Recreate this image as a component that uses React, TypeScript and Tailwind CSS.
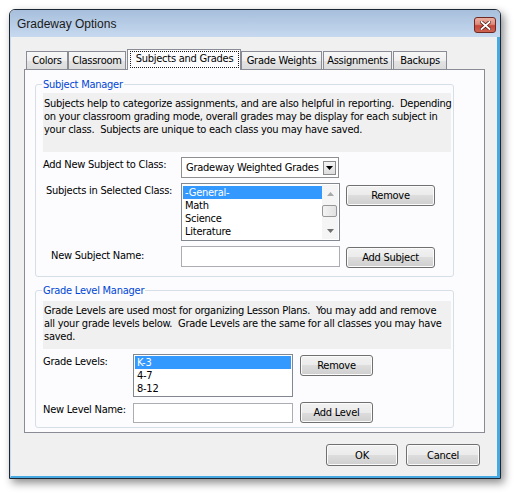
import type { ReactNode } from 'react'

const btnBase = 'flex items-center justify-center rounded-[3px] border border-[#707070] bg-[linear-gradient(#f2f2f2_0%,#ebebeb_50%,#dddddd_50%,#cfcfcf_100%)] shadow-[inset_0_0_0_1px_#fbfbfb] text-black leading-[13px]'
const tabBase = 'flex h-[18px] items-center justify-center border border-b-0 border-[#898c95] bg-[linear-gradient(#f7f7f7_0%,#efefef_50%,#e4e4e4_50%,#dbdbdb_100%)] pt-px'

function Button({ className, children }: { className: string, children: ReactNode }) {
  return <button type="button" className={`${btnBase} ${className}`}>{children}</button>
}

function Arrow({ dir, color }: { dir: 'up' | 'down', color: string }) {
  return (
    <svg width="7" height="4" viewBox="0 0 7 4">
      <path d={dir === 'up' ? 'M0 4 L3.5 0 L7 4Z' : 'M0 0 L7 0 L3.5 4Z'} fill={color} />
    </svg>
  )
}

function ScrollBar() {
  return (
    <div className="flex w-[16px] flex-col bg-[#f5f5f5]">
      <div className="flex h-[17px] items-center justify-center"><Arrow dir="up" color="#a8a8a8" /></div>
      <div className="flex-1 pt-[3px]">
        <div className="h-[12px] w-[15px] rounded-[2px] border border-[#979797] bg-[linear-gradient(90deg,#f3f3f3,#e2e2e2)]" />
      </div>
      <div className="flex h-[17px] items-center justify-center"><Arrow dir="down" color="#6f6f6f" /></div>
    </div>
  )
}

function ListItem({ text, selected }: { text: string, selected?: boolean }) {
  return (
    <div className={selected ? 'h-[13px] bg-[#3399ff] pl-[2px] leading-[13px] text-white' : 'h-[13px] pl-[2px] leading-[13px]'}>
      {text}
    </div>
  )
}

function Group({ title, className, children }: { title: string, className: string, children: ReactNode }) {
  return (
    <fieldset className={`ml-[10px] w-[419px] rounded-[3px] border border-[#d5dfe5] ${className}`}>
      <legend className="ml-[6px] px-px leading-[13px] text-[#0046d5]">{title}</legend>
      {children}
    </fieldset>
  )
}

function Note({ lines, className }: { lines: string[], className: string }) {
  return (
    <div className={`ml-[7px] w-[408px] bg-[#f0f0f0] pl-px leading-[13px] ${className}`}>
      {lines.map(l => <div key={l} className="whitespace-pre">{l}</div>)}
    </div>
  )
}

export default function App() {
  return (
    <div className="h-[494px] w-[515px] bg-white pl-[9px] pt-[9px] font-['DejaVu_Sans_Condensed','Liberation_Sans',sans-serif] text-[11px] tracking-[-0.25px] text-black">
      <div className="flex h-[470px] w-[492px] flex-col overflow-hidden rounded-t-[6px] border border-[#1c2733] shadow-[3px_4px_9px_rgba(0,0,0,0.45)]">
        {/* caption */}
        <div className="flex h-[27px] shrink-0 bg-[linear-gradient(#a7bfdc,#c6d9ef)]">
          <div className="flex flex-1 items-center pl-[7px] font-['Liberation_Sans',sans-serif] text-[12px] tracking-normal text-[#1a1a1a]">Gradeway Options</div>
          <div className="mr-[4px] mt-[7px] flex h-[16px] w-[22px] items-center justify-center rounded-[3px] border border-[#6e2a22] bg-[linear-gradient(#eab0a2_0%,#dd8a7b_45%,#c4473a_55%,#cf6452_100%)]">
            <svg width="11" height="9" viewBox="0 0 11 9">
              <path d="M1.5 1 L9.5 8 M9.5 1 L1.5 8" stroke="#5a1e18" strokeWidth="3.4" strokeLinecap="square" />
              <path d="M1.5 1 L9.5 8 M9.5 1 L1.5 8" stroke="#ffffff" strokeWidth="1.8" strokeLinecap="square" />
            </svg>
          </div>
        </div>

        {/* client */}
        <div className="flex-1 border-b-2 border-l border-r-[3px] border-b-[#47a9e1] border-l-[#c8daee] border-r-[#47a9e1] bg-[#f0f0f0] pl-[13px] pt-[12px]">
          <div className="flex h-[20px] items-end pl-[2px]">
            <div className={`${tabBase} w-[42px]`}>Colors</div>
            <div className={`${tabBase} w-[58px]`}>Classroom</div>
            <div className="relative z-10 -mb-px ml-px flex h-[21px] w-[114px] border border-b-0 border-[#898c95] bg-[#fcfcfe] px-px pt-px pb-[2px]">
              <div className="ml-px flex flex-1 items-center justify-center border border-dotted border-[#1a1a1a]">Subjects and Grades</div>
            </div>
            <div className={`${tabBase} w-[81px]`}>Grade Weights</div>
            <div className={`${tabBase} ml-px w-[69px]`}>Assignments</div>
            <div className={`${tabBase} ml-px w-[54px]`}>Backups</div>
          </div>

          <div className="h-[364px] w-[461px] border border-[#898c95] bg-[#fcfcfe] pt-[8px]">
            <Group title="Subject Manager" className="h-[199px]">
              <Note
                className="mt-[2px] h-[59px] pt-[4px]"
                lines={[
                  'Subjects help to categorize assignments, and are also helpful in reporting.  Depending',
                  'on your classroom grading mode, overall grades may be display for each subject in',
                  'your class.  Subjects are unique to each class you may have saved.',
                ]}
              />
              <div className="ml-[7px] mt-[5px] flex">
                <div className="w-[138px] pt-px leading-[13px]">Add New Subject to Class:</div>
                <div className="flex h-[21px] w-[158px] items-center border border-[#8f8f8f] bg-white pl-[4px] pr-[2px]">
                  <span className="flex-1 overflow-hidden whitespace-nowrap leading-[13px]">Gradeway Weighted Grades</span>
                  <div className="flex h-[14px] w-[13px] shrink-0 items-center justify-center border border-[#8a8a8a] bg-[linear-gradient(#f4f4f4,#dedede)]">
                    <Arrow dir="down" color="#000000" />
                  </div>
                </div>
              </div>
              <div className="ml-[7px] mt-[5px] flex">
                <div className="w-[138px] pl-[3px] pt-px leading-[13px]">Subjects in Selected Class:</div>
                <div className="flex h-[58px] w-[159px] border border-[#828790] bg-white p-px">
                  <div className="flex-1 pt-px">
                    <ListItem text="-General-" selected />
                    <ListItem text="Math" />
                    <ListItem text="Science" />
                    <ListItem text="Literature" />
                  </div>
                  <ScrollBar />
                </div>
                <Button className="ml-[6px] mt-[2px] h-[21px] w-[89px]">Remove</Button>
              </div>
              <div className="ml-[7px] mt-[5px] flex">
                <div className="w-[138px] pl-[8px] pt-[3px] leading-[13px]">New Subject Name:</div>
                <div className="h-[21px] w-[159px] border border-[#abadb3] bg-white" />
                <Button className="ml-[6px] mt-px h-[21px] w-[89px]">Add Subject</Button>
              </div>
            </Group>

            <Group title="Grade Level Manager" className="mt-[7px] h-[144px]">
              <Note
                className="mt-[4px] h-[48px] pt-[3px]"
                lines={[
                  'Grade Levels are used most for organizing Lesson Plans.  You may add and remove',
                  'all your grade levels below.  Grade Levels are the same for all classes you may have',
                  'saved.',
                ]}
              />
              <div className="ml-[7px] mt-[5px] flex">
                <div className="w-[90px] pt-px leading-[13px]">Grade Levels:</div>
                <div className="h-[43px] w-[160px] border border-[#828790] bg-white p-px">
                  <ListItem text="K-3" selected />
                  <ListItem text="4-7" />
                  <ListItem text="8-12" />
                </div>
                <Button className="ml-[7px] mt-px h-[21px] w-[73px]">Remove</Button>
              </div>
              <div className="ml-[7px] mt-[5px] flex">
                <div className="w-[90px] pt-px leading-[13px]">New Level Name:</div>
                <div className="mt-px h-[20px] w-[160px] border border-[#abadb3] bg-white" />
                <Button className="ml-[7px] h-[21px] w-[73px]">Add Level</Button>
              </div>
            </Group>
          </div>

          <div className="mt-[11px] flex justify-end gap-[8px] pr-[17px]">
            <Button className="h-[22px] w-[72px]">OK</Button>
            <Button className="h-[22px] w-[74px]">Cancel</Button>
          </div>
        </div>
      </div>
    </div>
  )
}
